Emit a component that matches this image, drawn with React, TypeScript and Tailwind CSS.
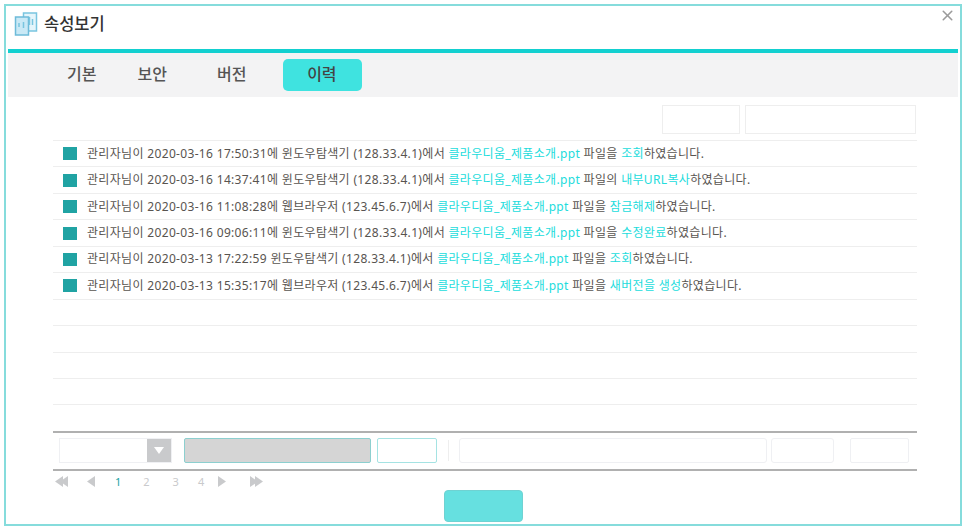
import React from 'react';
import { X } from 'lucide-react';

type Log = { pre: string; file: string; mid: string; action: string };

const logs: Log[] = [
  { pre: '관리자님이 2020-03-16 17:50:31에 윈도우탐색기 (128.33.4.1)에서 ', file: '클라우디움_제품소개.ppt', mid: ' 파일을 ', action: '조회' },
  { pre: '관리자님이 2020-03-16 14:37:41에 윈도우탐색기 (128.33.4.1)에서 ', file: '클라우디움_제품소개.ppt', mid: ' 파일의 ', action: '내부URL복사' },
  { pre: '관리자님이 2020-03-16 11:08:28에 웹브라우저 (123.45.6.7)에서 ', file: '클라우디움_제품소개.ppt', mid: ' 파일을 ', action: '잠금해제' },
  { pre: '관리자님이 2020-03-16 09:06:11에 윈도우탐색기 (128.33.4.1)에서 ', file: '클라우디움_제품소개.ppt', mid: ' 파일을 ', action: '수정완료' },
  { pre: '관리자님이 2020-03-13 17:22:59 윈도우탐색기 (128.33.4.1)에서 ', file: '클라우디움_제품소개.ppt', mid: ' 파일을 ', action: '조회' },
  { pre: '관리자님이 2020-03-13 15:35:17에 웹브라우저 (123.45.6.7)에서 ', file: '클라우디움_제품소개.ppt', mid: ' 파일을 ', action: '새버전을 생성' },
];

function WindowIcon() {
  return (
    <svg width="24" height="24" viewBox="0 0 24 24" fill="none">
      <rect x="9.5" y="1" width="13" height="18" fill="#e4f5fb" stroke="#79c5e0" strokeWidth="1.5" />
      <rect x="1.5" y="5" width="13" height="18" fill="#c9e9f6" stroke="#6dbbd9" strokeWidth="1.5" />
      <path d="M5 11v4M9.5 10v6M15.5 5v8M18.5 7v6" stroke="#79c5e0" strokeWidth="1.5" />
    </svg>
  );
}

function Tri({ dir, double }: { dir: 'l' | 'r'; double?: boolean }) {
  const p = dir === 'l' ? 'M8 0v11L0 5.5z' : 'M0 0v11l8-5.5z';
  const p2 = dir === 'l' ? 'M13 0v11L5 5.5z' : 'M5 0v11l8-5.5z';
  return (
    <svg width={double ? 13 : 8} height="11" viewBox={double ? '0 0 13 11' : '0 0 8 11'} fill="#c9cacc">
      <path d={p} />
      {double && <path d={p2} />}
    </svg>
  );
}

export default function App() {
  return (
    <div className="w-[966px] h-[530px] bg-white pt-1 pl-1 font-['Noto_Sans','Noto_Sans_CJK_KR',sans-serif]">
      <div className="relative w-[958px] h-[522px] border-2 border-[#86dcdc] px-[2px]">
        <X className="absolute right-[4px] top-[1px] text-[#9b9b9b]" size={17} strokeWidth={2.2} />

        <div className="flex h-[43px] gap-[6px] pl-[6px] pt-[6px]">
          <WindowIcon />
          <span className="text-[16.5px] leading-[24px] font-medium text-[#333]">속성보기</span>
        </div>

        <div className="h-1 bg-[#12d0d0]" />

        <div className="flex items-center h-11 bg-[#f3f3f4] text-[#555] text-[16px] font-medium">
          <span className="ml-[59px] pb-[2px]">기본</span>
          <span className="ml-[41px] pb-[2px]">보안</span>
          <span className="ml-[50px] pb-[2px]">버전</span>
          <span className="ml-[37px] flex h-[32px] w-[79px] items-center justify-center rounded-[5px] bg-[#3fe3e0] pb-[2px] pr-[2px] text-[#444]">이력</span>
        </div>

        <div className="flex justify-end gap-[5px] pt-2 pr-[42px]">
          <div className="h-[29px] w-[78px] border border-[#eeeeee]" />
          <div className="h-[29px] w-[171px] border border-[#eeeeee]" />
        </div>

        <div className="ml-[45px] mt-[6px] w-[864px] border-t border-[#eeeeee]">
          {logs.map((l) => (
            <div key={l.pre} className="flex h-[26.45px] items-center border-b border-[#eeeeee] text-[12px] tracking-[0.33px] text-[#585450]">
              <span className="ml-[10px] mr-[10px] h-[13px] w-[14px] bg-[#20a3a3]" />
              <span className="whitespace-pre">
                {l.pre}
                <span className="text-[#22dcdc]">{l.file}</span>
                {l.mid}
                <span className="text-[#22dcdc]">{l.action}</span>
                하였습니다.
              </span>
            </div>
          ))}
          {[0, 1, 2, 3].map((i) => (
            <div key={i} className="h-[26.45px] border-b border-[#eeeeee]" />
          ))}
        </div>

        <div className="ml-[45px] mt-[26px] flex h-[40px] w-[864px] items-start border-y-2 border-[#b0b0b0] pl-[6px] pt-[5px]">
          <div className="flex h-[25px] w-[113px] justify-end border border-[#eff0f3]">
            <div className="flex w-[24px] items-center justify-center bg-[#c9cacc]">
              <svg width="10" height="7" viewBox="0 0 10 7" fill="#fff"><path d="M0 0h10L5 7z" /></svg>
            </div>
          </div>
          <div className="ml-3 h-[25px] w-[187px] rounded-[2px] border border-[#8ccfcf] bg-[#d5d5d5]" />
          <div className="ml-[6px] h-[25px] w-[60px] rounded-[2px] border border-[#a5e3e3]" />
          <div className="ml-[11px] mt-[2px] h-[21px] w-px bg-[#eeeeee]" />
          <div className="ml-[10px] h-[25px] w-[308px] rounded-[3px] border border-[#eff0f3]" />
          <div className="ml-[4px] h-[25px] w-[63px] rounded-[3px] border border-[#eff0f3]" />
          <div className="ml-4 h-[25px] w-[59px] rounded-[2px] border border-[#eff0f3]" />
        </div>

        <div className="ml-[47px] mt-[4px] flex h-[13px] items-center text-[11px] text-[#c9cacc]">
          <Tri dir="l" double />
          <span className="ml-[19px] flex"><Tri dir="l" /></span>
          <span className="ml-[20px] text-[#20a3a3]">1</span>
          <span className="ml-[22px]">2</span>
          <span className="ml-[23px]">3</span>
          <span className="ml-[19px]">4</span>
          <span className="ml-[14px] flex"><Tri dir="r" /></span>
          <span className="ml-[24px] flex"><Tri dir="r" double /></span>
        </div>

        <div className="absolute bottom-[2px] left-[438px] h-[32px] w-[79px] rounded-[4px] border border-[#6fd2d2] bg-[#66e0e0]" />
      </div>
    </div>
  );
}
